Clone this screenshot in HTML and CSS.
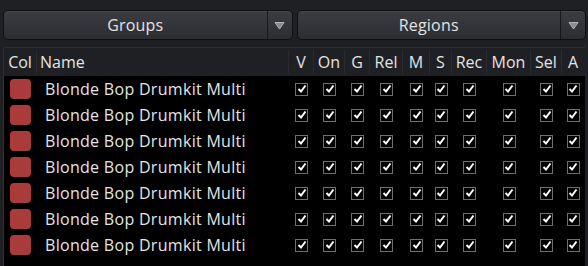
FILE: index.html
```html
<!DOCTYPE html>
<html lang="en">
<head>
    <meta charset="UTF-8">
    <title>Route Groups</title>
    <link rel="stylesheet" href="styles.css">
</head>
<body>
    <div class="toolbar">
        <div class="combo">
            <span class="combo-label">Groups</span>
            <span class="combo-arrow"><svg width="11" height="9" viewBox="0 0 11 9"><path d="M1 1.5 H10 L5.5 8 Z" fill="#8a8c90" stroke="#b0b2b6" stroke-width="1"/></svg></span>
        </div>
        <div class="combo">
            <span class="combo-label">Regions</span>
            <span class="combo-arrow"><svg width="11" height="9" viewBox="0 0 11 9"><path d="M1 1.5 H10 L5.5 8 Z" fill="#8a8c90" stroke="#b0b2b6" stroke-width="1"/></svg></span>
        </div>
    </div>

    <div class="panel">
        <div class="grid head">
            <div class="hcell">Col</div>
            <div class="hcell left">Name</div>
            <div class="hcell">V</div>
            <div class="hcell">On</div>
            <div class="hcell">G</div>
            <div class="hcell">Rel</div>
            <div class="hcell">M</div>
            <div class="hcell">S</div>
            <div class="hcell">Rec</div>
            <div class="hcell">Mon</div>
            <div class="hcell">Sel</div>
            <div class="hcell last">A</div>
        </div>
        <div class="rows" id="rows"></div>
    </div>

    <script>
        const rows = document.getElementById('rows');
        const check = '<span class="box"><svg width="10" height="10" viewBox="0 0 10 10"><path d="M1.5 5 L4 7.5 L8.5 1.5" fill="none" stroke="#fff" stroke-width="2"/></svg></span>';
        for (let i = 0; i < 7; i++) {
            let html = '<div class="grid row"><div class="cell"><span class="swatch"></span></div>';
            html += '<div class="cell name">Blonde Bop Drumkit Multi</div>';
            for (let c = 0; c < 10; c++) {
                html += '<div class="cell">' + check + '</div>';
            }
            html += '</div>';
            rows.insertAdjacentHTML('beforeend', html);
        }
    </script>
</body>
</html>
```

FILE: styles.css
```css
* {
    margin: 0;
    padding: 0;
    box-sizing: border-box;
}

body {
    font-family: 'Open Sans', sans-serif;
    font-size: 15px;
    background: #1f2024;
    color: #e4e4e4;
    width: 588px;
    height: 266px;
    overflow: hidden;
}

.toolbar {
    display: flex;
    gap: 4px;
    padding: 10px 2px 0 3px;
    height: 47px;
}

.combo {
    flex: 1;
    height: 30px;
    display: flex;
    border: 1px solid #0f1012;
    border-radius: 5px;
    background: linear-gradient(#3b3d42, #2b2d31);
    box-shadow: inset 0 1px 0 #46484d;
}

.combo-label {
    flex: 1;
    display: flex;
    align-items: center;
    justify-content: center;
    font-size: 16px;
    letter-spacing: 0.2px;
    color: #e2e2e2;
    border-right: 1px solid #17181a;
}

.combo-arrow {
    width: 24px;
    display: flex;
    align-items: center;
    justify-content: center;
}

.panel {
    margin-left: 3px;
    margin-right: 3px;
    border-top: 1px solid #2e2f33;
    border-left: 1px solid #2e2f33;
    border-top-left-radius: 3px;
    background: #000;
    height: 219px;
}

.grid {
    display: grid;
    grid-template-columns: 33px 252px 25px 31px 25px 33px 27px 22px 35px 44px 31px 22px;
}

.head {
    height: 28px;
    background: #1f2024;
    align-items: center;
}

.hcell {
    text-align: center;
    font-size: 16px;
    line-height: 24px;
    border-right: 1px solid #2a2b2f;
}

.hcell.left {
    text-align: left;
    padding-left: 3px;
}

.hcell.last {
    border-right: none;
}

.row {
    height: 26px;
    align-items: center;
}

.cell {
    display: flex;
    align-items: center;
    justify-content: center;
}

.cell.name {
    justify-content: flex-start;
    padding-left: 8px;
    font-size: 16px;
    letter-spacing: 0.3px;
}

.swatch {
    width: 21px;
    height: 20px;
    border-radius: 4px;
    background: #aa3b3b;
}

.box {
    width: 13px;
    height: 13px;
    border: 1px solid #6f6f6f;
    display: flex;
    align-items: center;
    justify-content: center;
}
```
